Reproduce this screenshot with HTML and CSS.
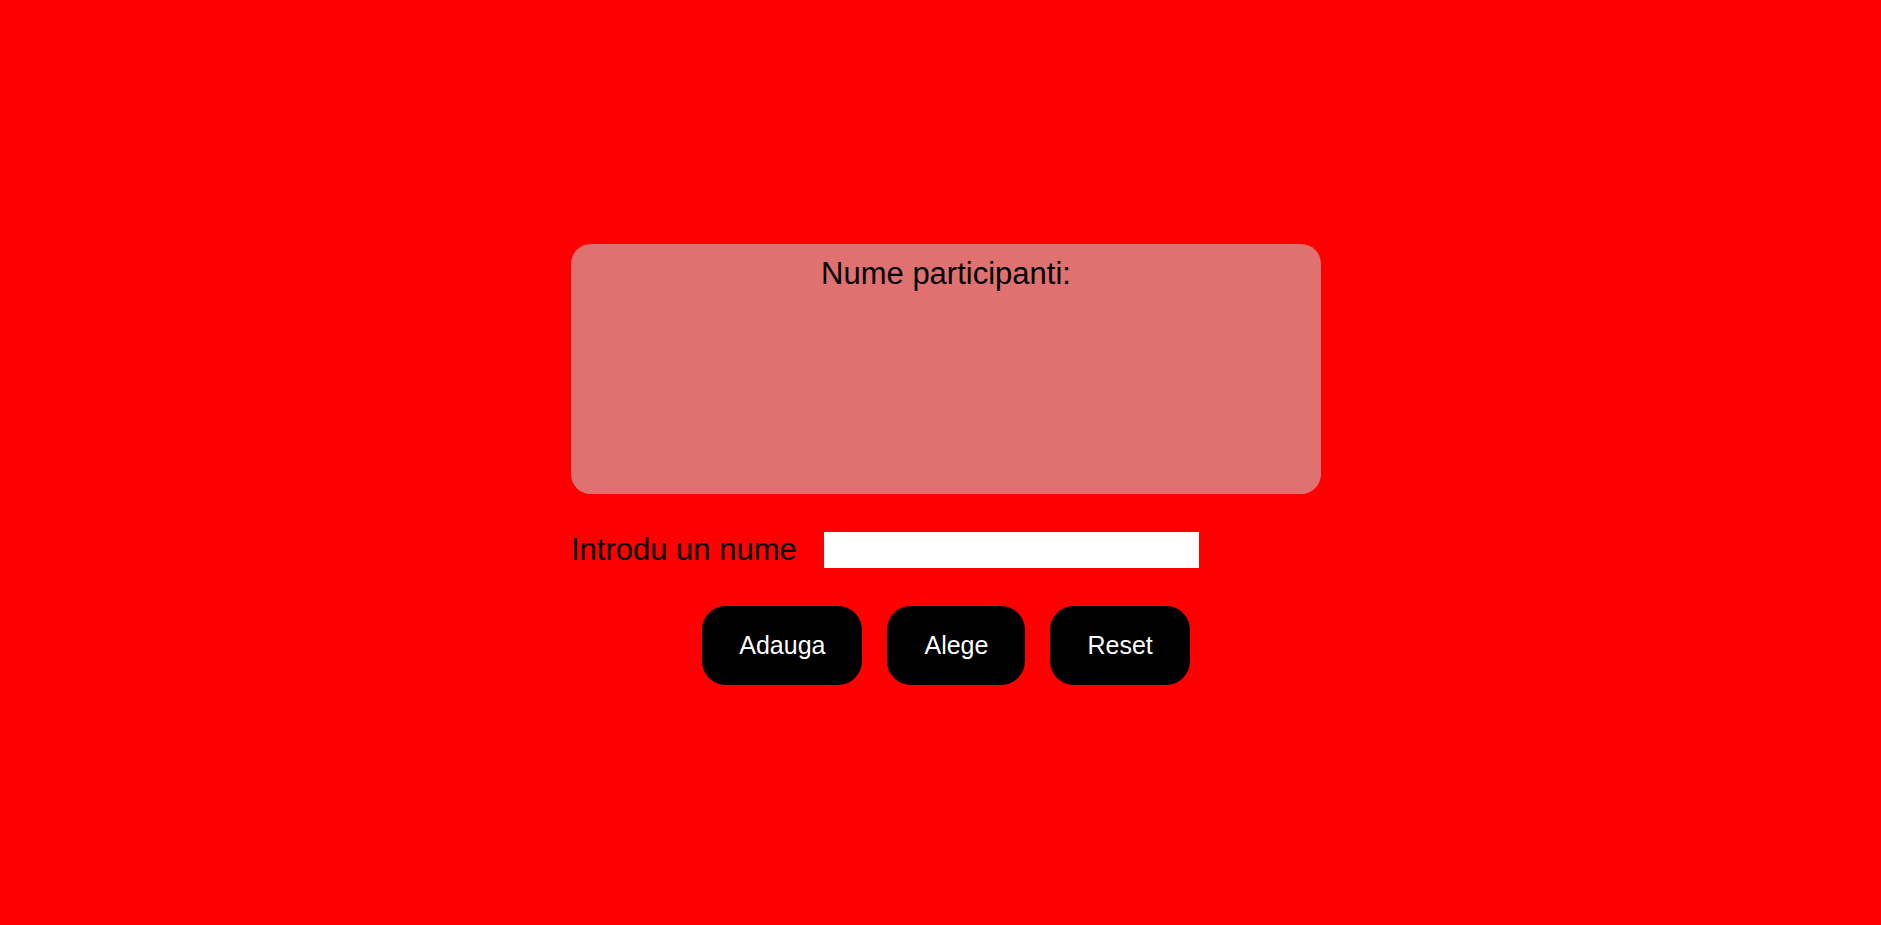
FILE: index.html
```html
<!DOCTYPE html>
<html lang="ro">
<head>
<meta charset="utf-8">
<title>Participanti</title>
<link rel="stylesheet" href="styles.css">
</head>
<body>
<main class="page">
  <div class="wrap">
    <section class="panel">
      <h2 class="panel-title">Nume participanti:</h2>
    </section>
    <div class="entry-row">
      <label class="entry-label" for="nume">Introdu un nume</label>
      <input class="entry-input" id="nume" type="text">
    </div>
    <div class="actions">
      <button class="btn">Adauga</button>
      <button class="btn">Alege</button>
      <button class="btn">Reset</button>
    </div>
  </div>
</main>
</body>
</html>
```
FILE: styles.css
```css
html, body {
  margin: 0;
  padding: 0;
}
body {
  background: #ff0000;
  font-family: "Liberation Sans", Arial, sans-serif;
}
.page {
  min-height: 100vh;
  box-sizing: border-box;
  padding: 3px 0 0 11px;
  display: flex;
  align-items: center;
  justify-content: center;
}
.wrap {
  width: 750px;
  display: flex;
  flex-direction: column;
}
.panel {
  height: 250px;
  box-sizing: border-box;
  padding-top: 12px;
  background: #e07171;
  border-radius: 20px;
  text-align: center;
}
.panel-title {
  margin: 0;
  font-size: 31px;
  font-weight: normal;
  color: #000;
}
.entry-row {
  margin-top: 38px;
  display: flex;
  align-items: center;
  gap: 27px;
}
.entry-label {
  font-size: 31px;
  color: #000;
}
.entry-input {
  width: 375px;
  height: 36px;
  box-sizing: border-box;
  border: none;
  background: #fff;
  margin: 0;
  padding: 0 4px;
  outline: none;
}
.actions {
  margin-top: 38px;
  display: flex;
  justify-content: center;
  gap: 25px;
}
.btn {
  height: 79px;
  padding: 0 37px;
  border: none;
  border-radius: 24px;
  background: #000;
  color: #fff;
  font-family: "Liberation Sans", Arial, sans-serif;
  font-size: 25px;
  cursor: pointer;
}
```
